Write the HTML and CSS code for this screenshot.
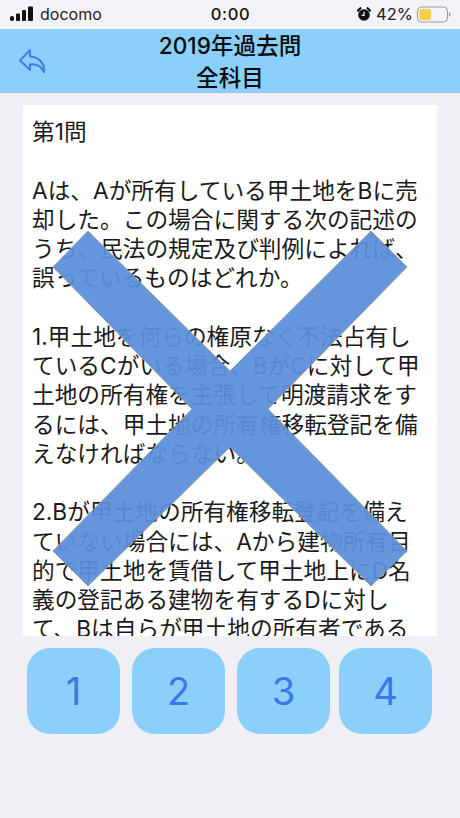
FILE: index.html
```html
<!DOCTYPE html>
<html lang="ja">
<head>
<meta charset="utf-8">
<title>2019年過去問</title>
<link rel="stylesheet" href="styles.css">
</head>
<body>
<div class="screen">
  <div class="status">
    <div class="status-left">
      <svg class="signal" width="24" height="16" viewBox="0 0 24 16"><rect x="0" y="10" width="4" height="5" rx="1.8"/><rect x="6" y="7.5" width="4" height="7.5" rx="1"/><rect x="12" y="4" width="4" height="11" rx="1"/><rect x="18" y="0.5" width="5" height="14.5" rx="1"/></svg>
      <span>docomo</span>
    </div>
    <div class="status-time">0:00</div>
    <div class="status-right">
      <svg class="alarm" width="14" height="15" viewBox="0 0 14 15"><circle cx="7" cy="8" r="5.8" fill="#111"/><path d="M1 3.6 3.4 1.2 M13 3.6 10.6 1.2" stroke="#111" stroke-width="2.2" stroke-linecap="round"/><path d="M7 4.6V8.3H4.6" stroke="#f2f2f7" stroke-width="1.2" fill="none"/></svg>
      <span class="pct">42%</span>
      <svg class="battery" width="34" height="17" viewBox="0 0 34 17"><rect x="0.5" y="1" width="30" height="15" rx="4" fill="none" stroke="#9a9a9c"/><rect x="2.5" y="3" width="11.5" height="11" rx="2.2" fill="#f6cf45"/><path d="M32 6.2c1 .4 1.5 1.2 1.5 2.3s-.5 1.9-1.5 2.3z" fill="#9a9a9c"/></svg>
    </div>
  </div>
  <header class="nav">
    <svg class="back" width="29" height="26" viewBox="0 0 29 26"><path d="M12 2 2 12.5 12 22V16.5C18 15.8 23 18 26 24 27 15.5 21 9 12 8.5Z" fill="none" stroke="#3f7fe8" stroke-width="2" stroke-linejoin="round"/></svg>
    <h1 class="title">2019年過去問<br>全科目</h1>
  </header>
  <main class="card">
    <p class="para">第1問</p>
    <p class="para">Aは、Aが所有している甲土地をBに売<br>却した。この場合に関する次の記述の<br>うち、民法の規定及び判例によれば、<br>誤っているものはどれか。</p>
    <p class="para">1.甲土地を何らの権原なく不法占有し<br>ているCがいる場合、BがCに対して甲<br>土地の所有権を主張して明渡請求をす<br>るには、甲土地の所有権移転登記を備<br>えなければならない。</p>
    <p class="para">2.Bが甲土地の所有権移転登記を備え<br>ていない場合には、Aから建物所有目<br>的で甲土地を賃借して甲土地上にD名<br>義の登記ある建物を有するDに対し<br>て、Bは自らが甲土地の所有者である</p>
  </main>
  <div class="answers">
    <button class="answer">1</button>
    <button class="answer">2</button>
    <button class="answer">3</button>
    <button class="answer last">4</button>
  </div>
  <svg class="cross" width="460" height="818" viewBox="0 0 460 818"><polygon points="88,231 230,371 371,231 407,267 268,409 407,551 371,586 230,447 88,586 53,551 192,409 53,267"/></svg>
</div>
</body>
</html>
```
FILE: styles.css
```css
* { box-sizing: border-box; }
html, body { margin: 0; padding: 0; }
body {
  width: 460px;
  height: 818px;
  overflow: hidden;
  background: #efeff5;
  font-family: "Inter", "Noto Sans CJK JP", sans-serif;
  color: #111;
}
.screen {
  position: relative;
  width: 460px;
  height: 818px;
  display: flex;
  flex-direction: column;
}
.status {
  height: 29px;
  display: grid;
  grid-template-columns: 1fr auto 1fr;
  align-items: center;
  padding: 0 9px 1px 10px;
  font-size: 16px;
  background: #f2f2f7;
}
.status-left { display: flex; align-items: center; gap: 6px; color: #222; }
.status-time { font-size: 16.5px; font-weight: 500; letter-spacing: 0.6px; }
.status-right { display: flex; align-items: center; justify-content: flex-end; gap: 5px; }
.alarm { margin-right: -2px; }
.pct { font-size: 16.5px; color: #222; margin-left: 2px; margin-right: -1px; }
.signal { fill: #111; }
.nav {
  position: relative;
  height: 64px;
  padding-top: 3px;
  background: #8ad0fb;
  border-bottom: 1px solid #9fc0d8;
  display: flex;
  justify-content: center;
  align-items: center;
}
.back { position: absolute; left: 18px; top: 19px; }
.title {
  margin: 0;
  font-size: 22.6px;
  line-height: 32px;
  font-weight: 500;
  text-align: center;
  color: #0c0c0c;
}
.card {
  margin: 12px 23px 0;
  height: 531px;
  background: #fff;
  padding: 12px 9px 0;
  overflow: hidden;
  font-size: 22.7px;
  line-height: 29.25px;
  color: #1a1a1a;
}
.para { margin: 0 0 29.25px; white-space: nowrap; }
.answers {
  display: flex;
  gap: 12px;
  padding: 12px 0 0 27px;
}
.answer {
  width: 93px;
  height: 86px;
  border: 0;
  border-radius: 23px;
  background: #8ad0fb;
  color: #3a78ea;
  font-family: "Inter", sans-serif;
  font-size: 38px;
  padding: 0;
}
.answer.last { margin-left: -3px; }
.cross { position: absolute; left: 0; top: 0; pointer-events: none; }
.cross polygon { fill: #5b8fdb; fill-opacity: 0.94; stroke: #9a9a9a; stroke-width: 1; }
```
